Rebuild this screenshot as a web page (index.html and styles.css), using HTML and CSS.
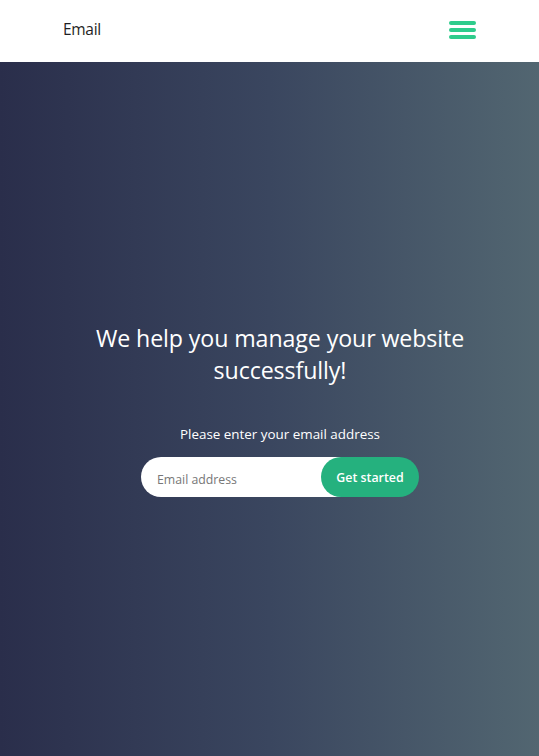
FILE: index.html
```html
<!DOCTYPE html>
<html lang="en">
<head>
<meta charset="utf-8">
<title>Email</title>
<link rel="stylesheet" href="styles.css">
</head>
<body>
<header class="topbar">
  <div class="brand">Email</div>
  <button class="menu" aria-label="Menu">
    <span class="bar"></span>
    <span class="bar"></span>
    <span class="bar"></span>
  </button>
</header>
<main class="hero">
  <div class="hero-inner">
    <h1 class="title">We help you manage your website<br>successfully!</h1>
    <p class="lead">Please enter your email address</p>
    <form class="signup">
      <input class="email" type="text" placeholder="Email address">
      <button class="cta" type="button">Get started</button>
    </form>
  </div>
</main>
</body>
</html>
```

FILE: styles.css
```css
* { box-sizing: border-box; }
html, body { margin: 0; padding: 0; }
body {
  font-family: "Open Sans", "Liberation Sans", sans-serif;
  height: 756px;
  display: flex;
  flex-direction: column;
  background: #fff;
}
.topbar {
  height: 62px;
  flex: 0 0 62px;
  display: flex;
  align-items: center;
  justify-content: space-between;
  padding: 0 63px 0 63px;
  background: #fff;
}
.brand {
  font-size: 15.5px;
  color: #1f1f24;
  letter-spacing: -0.3px;
  margin-top: -4px;
}
.menu {
  border: 0;
  background: transparent;
  padding: 0;
  width: 27px;
  display: flex;
  flex-direction: column;
  gap: 3px;
  margin-top: -3px;
  cursor: pointer;
}
.bar {
  display: block;
  height: 4px;
  width: 27px;
  border-radius: 2px;
  background: #2ecc8c;
}
.hero {
  flex: 1;
  display: flex;
  align-items: center;
  justify-content: center;
  padding-left: 21px;
  background: linear-gradient(90deg, #2a2e4b 0%, #3a465f 50%, #526671 100%);
  color: #fff;
}
.hero-inner {
  display: flex;
  flex-direction: column;
  align-items: center;
  text-align: center;
  margin-top: 0;
}
.title {
  margin: 0;
  font-size: 23.2px;
  font-weight: 400;
  line-height: 32px;
  letter-spacing: -0.1px;
}
.lead {
  margin: 39px 0 0;
  font-size: 13.4px;
  line-height: 18px;
}
.signup {
  margin: 14px 0 0;
  display: flex;
  align-items: center;
}
.email {
  width: 222px;
  height: 40px;
  border: 0;
  outline: none;
  border-radius: 20px 0 0 20px;
  padding: 5px 0 0 16px;
  font-family: inherit;
  font-size: 12.3px;
  color: #333;
  background: #fff;
}
.email::placeholder { color: #777; }
.cta {
  width: 98px;
  height: 40px;
  margin-left: -42px;
  border: 0;
  border-radius: 20px;
  background: #25b17e;
  color: #fff;
  font-family: inherit;
  font-size: 12.4px;
  font-weight: 600;
  padding: 2px 0 0;
  cursor: pointer;
}
```
